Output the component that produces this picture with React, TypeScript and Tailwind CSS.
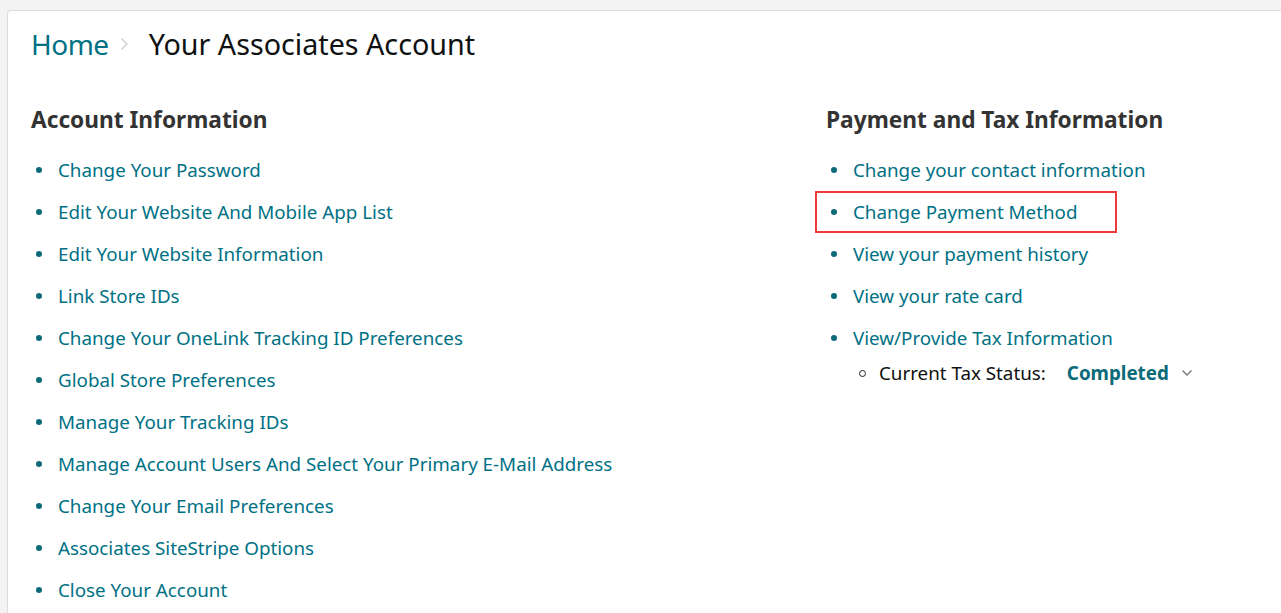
import React from "react";

const left = [
  "Change Your Password",
  "Edit Your Website And Mobile App List",
  "Edit Your Website Information",
  "Link Store IDs",
  "Change Your OneLink Tracking ID Preferences",
  "Global Store Preferences",
  "Manage Your Tracking IDs",
  "Manage Account Users And Select Your Primary E-Mail Address",
  "Change Your Email Preferences",
  "Associates SiteStripe Options",
  "Close Your Account",
];

function Dot() {
  return <span className="w-[6px] h-[6px] rounded-full bg-[#0a6a78] shrink-0" />;
}

function Item({ text, boxed }: { text: string; boxed?: boolean }) {
  return (
    <li className="h-[42px] flex items-center relative">
      <span className="w-[27px] flex justify-start pl-[5px]">
        <Dot />
      </span>
      <a className="text-[#007185] text-[18.8px]">{text}</a>
      {boxed && (
        <span className="absolute left-[-11px] top-[0px] w-[302px] h-[42px] border-2 border-[#f03a3a]" />
      )}
    </li>
  );
}

export default function App() {
  return (
    <div
      className="h-[613px] overflow-hidden bg-[#f3f3f3] pt-[10px] pl-[7px]"
      style={{ fontFamily: '"Noto Sans", "Open Sans", Arial, sans-serif' }}
    >
      <div className="h-[700px] bg-white border border-r-0 border-[#dcdcdc] rounded-tl-[4px] pl-[23px]">
        <div className="flex items-center h-[66px]">
          <span className="text-[28px] text-[#007185] tracking-[-0.5px]">Home</span>
          <svg className="ml-[11px] mr-[20px]" width="9" height="14" viewBox="0 0 9 14">
            <path d="M1.5 1.5 L7 7 L1.5 12.5" fill="none" stroke="#cccccc" strokeWidth="1.3" />
          </svg>
          <span className="text-[28.7px] text-[#0f1111]">Your Associates Account</span>
        </div>
        <div className="flex mt-[20px]">
          <div className="w-[795px]">
            <h2 className="text-[22.7px] font-bold text-[#333333] h-[42px] mt-[2px] flex items-center">Account Information</h2>
            <ul className="mt-[8px]">
              {left.map((t) => (
                <Item key={t} text={t} />
              ))}
            </ul>
          </div>
          <div>
            <h2 className="text-[22.7px] font-bold text-[#333333] h-[42px] mt-[2px] flex items-center">Payment and Tax Information</h2>
            <ul className="mt-[8px]">
              <Item text="Change your contact information" />
              <Item text="Change Payment Method" boxed />
              <Item text="View your payment history" />
              <Item text="View your rate card" />
              <Item text="View/Provide Tax Information" />
              <li className="flex items-center h-[30px] pl-[33px] -mt-[1px]">
                <span className="w-[7px] h-[7px] rounded-full border border-[#222] mr-[13px] shrink-0" />
                <span className="text-[18.8px] text-[#0f1111]">Current Tax Status:</span>
                <span className="text-[18.8px] font-bold text-[#0a6a78] ml-[21px]">Completed</span>
                <svg className="ml-[12px]" width="12" height="8" viewBox="0 0 12 8">
                  <path d="M1.5 1.5 L6 6 L10.5 1.5" fill="none" stroke="#777" strokeWidth="1.4" />
                </svg>
              </li>
            </ul>
          </div>
        </div>
      </div>
    </div>
  );
}
